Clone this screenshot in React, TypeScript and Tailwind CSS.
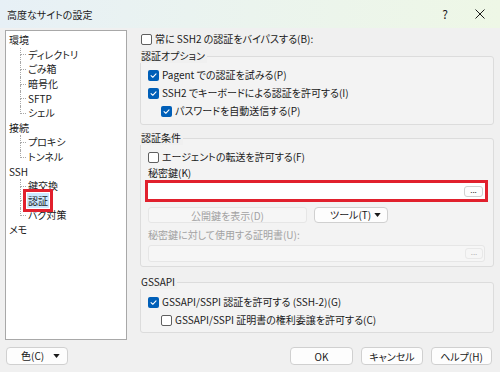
import React from 'react'

type Node = { label: string; children: string[] }

const tree: Node[] = [
  { label: '環境', children: ['ディレクトリ', 'ごみ箱', '暗号化', 'SFTP', 'シェル'] },
  { label: '接続', children: ['プロキシ', 'トンネル'] },
  { label: 'SSH', children: ['鍵交換', '認証', 'バグ対策'] },
  { label: 'メモ', children: [] },
]

function Check({ checked }: { checked?: boolean }) {
  if (checked) {
    return (
      <span className="flex h-[11px] w-[11px] shrink-0 items-center justify-center rounded-[2px] bg-[#005fb8]">
        <svg viewBox="0 0 10 10" className="h-[9px] w-[9px]">
          <path d="M2.3 5.2 L4.2 7 L7.8 3.2" fill="none" stroke="white" strokeWidth="1.2" strokeLinecap="round" strokeLinejoin="round" />
        </svg>
      </span>
    )
  }
  return <span className="h-[11px] w-[11px] shrink-0 rounded-[2px] border border-[#5f5f5f] bg-white" />
}

function CheckRow({ label, checked, indent }: { label: string; checked?: boolean; indent?: boolean }) {
  return (
    <div className={`flex h-[18px] items-center gap-[3px] ${indent ? 'pl-[13px]' : ''}`}>
      <Check checked={checked} />
      <span className="leading-none">{label}</span>
    </div>
  )
}

function Group({ title, className, children }: { title: string; className?: string; children: React.ReactNode }) {
  return (
    <div className={className}>
      <div className="relative z-10 h-[14px] w-fit bg-[#f0f0f0] pl-[1px] pr-[2px] leading-[14px]">{title}</div>
      <div className="-mt-[7px] rounded-[3px] border border-[#dcdcdc] bg-[#f3f3f3]">{children}</div>
    </div>
  )
}

function TreeRow({ text, last }: { text: string; last: boolean }) {
  const selected = text === '認証'
  return (
    <div className="flex h-[14.6px] items-stretch">
      <div className="ml-[11px] flex w-[6px] flex-col">
        <div className="flex-1 border-b border-l border-dotted border-[#a8a8a8]" />
        <div className={`flex-1 ${last ? '' : 'border-l border-dotted border-[#a8a8a8]'}`} />
      </div>
      {selected ? (
        <span className="relative z-10 ml-[1px] self-center bg-[#cce8ff] px-[1px] py-[1px] leading-[13px] outline-[3px] outline-offset-[1px] outline-[#e1202d]">
          {text}
        </span>
      ) : (
        <span className="ml-[2px] self-center leading-none">{text}</span>
      )}
    </div>
  )
}

function Btn({ children, className }: { children: React.ReactNode; className?: string }) {
  return (
    <div className={`flex h-[18px] items-center justify-center rounded-[4px] border border-[#d0d0d0] bg-[#fdfdfd] ${className ?? ''}`}>
      {children}
    </div>
  )
}

function Caret() {
  return (
    <svg viewBox="0 0 8 5" className="h-[4px] w-[7px]">
      <path d="M0 0 H8 L4 5 Z" fill="#1a1a1a" />
    </svg>
  )
}

export default function App() {
  return (
    <div className="flex h-[372px] w-[500px] flex-col overflow-hidden bg-[#f0f0f0] font-['Noto_Sans_CJK_JP','Noto_Sans',sans-serif] text-[10px] text-[#1a1a1a] [font-feature-settings:'palt']">
      {/* title bar */}
      <div className="flex h-[28px] shrink-0 items-center bg-gradient-to-r from-[#e7f0f6] via-[#ebf4ee] to-[#eef7e6] pl-[7px]">
        <span className="text-[10px]">高度なサイトの設定</span>
        <span className="ml-auto text-[12px]">?</span>
        <svg viewBox="0 0 10 10" className="ml-[27px] mr-[15px] h-[10px] w-[10px]">
          <path d="M0.5 0.5 L9.5 9.5 M9.5 0.5 L0.5 9.5" stroke="#1a1a1a" strokeWidth="1" />
        </svg>
      </div>

      <div className="flex h-[314px] shrink-0">
        {/* tree */}
        <div className="ml-[5px] mt-[2px] h-[310px] w-[122px] border border-[#a8a8a8] bg-white pl-[3px] pt-[2px]">
          {tree.map(n => (
            <div key={n.label}>
              <div className="flex h-[14.6px] items-center leading-none">{n.label}</div>
              {n.children.map((c, i) => (
                <TreeRow key={c} text={c} last={i === n.children.length - 1} />
              ))}
            </div>
          ))}
        </div>

        {/* settings */}
        <div className="ml-[13px] w-[354px] pt-[3px]">
          <div className="flex h-[16px] items-center gap-[3px] pl-[1px]">
            <Check />
            <span className="leading-none">常に SSH2 の認証をバイパスする(B):</span>
          </div>

          <Group title="認証オプション" className="mt-[2px]">
            <div className="pb-[4px] pl-[7px] pt-[9px]">
              <CheckRow checked label="Pagent での認証を試みる(P)" />
              <CheckRow checked label="SSH2 でキーボードによる認証を許可する(I)" />
              <CheckRow checked indent label="パスワードを自動送信する(P)" />
            </div>
          </Group>

          <Group title="認証条件" className="mt-[6px]">
            <div className="pb-[4px] pl-[7px] pr-[8px] pt-[9px]">
              <CheckRow label="エージェントの転送を許可する(F)" />
              <div className="flex h-[14px] items-center leading-none">秘密鍵(K)</div>
              <div className="-mx-[3px] h-[22px] border-[3px] border-[#e1202d]">
                <div className="flex h-full items-center justify-end bg-white pr-[2px]">
                  <div className="flex h-[11px] w-[19px] items-center justify-center rounded-[3px] border border-[#d0d0d0] bg-[#fdfdfd] pb-[3px] text-[8px] leading-none">
                    ...
                  </div>
                </div>
              </div>
              <div className="mt-[5px] flex h-[16px] gap-[7px]">
                <div className="flex w-[159px] items-center justify-center rounded-[3px] border border-[#e6e6e6] bg-[#f6f6f6] text-[#a2a2a2]">
                  公開鍵を表示(D)
                </div>
                <div className="flex w-[74px] items-center rounded-[4px] border border-[#d0d0d0] bg-[#fdfdfd] pl-[15px] pr-[6px]">
                  <span className="leading-none">ツール(T)</span>
                  <span className="ml-auto">
                    <Caret />
                  </span>
                </div>
              </div>
              <div className="mt-[5px] flex h-[14px] items-center leading-none text-[#a2a2a2]">
                秘密鍵に対して使用する証明書(U):
              </div>
              <div className="mt-[3px] flex h-[17px] items-center justify-end rounded-[3px] border border-[#e6e6e6] bg-[#f6f6f6] pr-[1px]">
                <div className="flex h-[11px] w-[18px] items-center justify-center rounded-[3px] border border-[#e8e8e8] pb-[3px] text-[8px] leading-none text-[#b0b0b0]">
                  ...
                </div>
              </div>
            </div>
          </Group>

          <Group title="GSSAPI" className="mt-[8px]">
            <div className="pb-[3px] pl-[7px] pt-[10px]">
              <CheckRow checked label="GSSAPI/SSPI 認証を許可する (SSH-2)(G)" />
              <CheckRow indent label="GSSAPI/SSPI 証明書の権利委譲を許可する(C)" />
            </div>
          </Group>
        </div>
      </div>

      {/* bottom buttons */}
      <div className="flex pt-[5px]">
        <Btn className="ml-[6px] w-[62px] justify-start pl-[14px] pr-[7px]">
          <span className="leading-none">色(C)</span>
          <span className="ml-auto">
            <Caret />
          </span>
        </Btn>
        <Btn className="ml-auto w-[63px] border-[#5e9bd6]">OK</Btn>
        <Btn className="ml-[8px] w-[62px]">キャンセル</Btn>
        <Btn className="ml-[8px] mr-[8px] w-[61px]">ヘルプ(H)</Btn>
      </div>
    </div>
  )
}
